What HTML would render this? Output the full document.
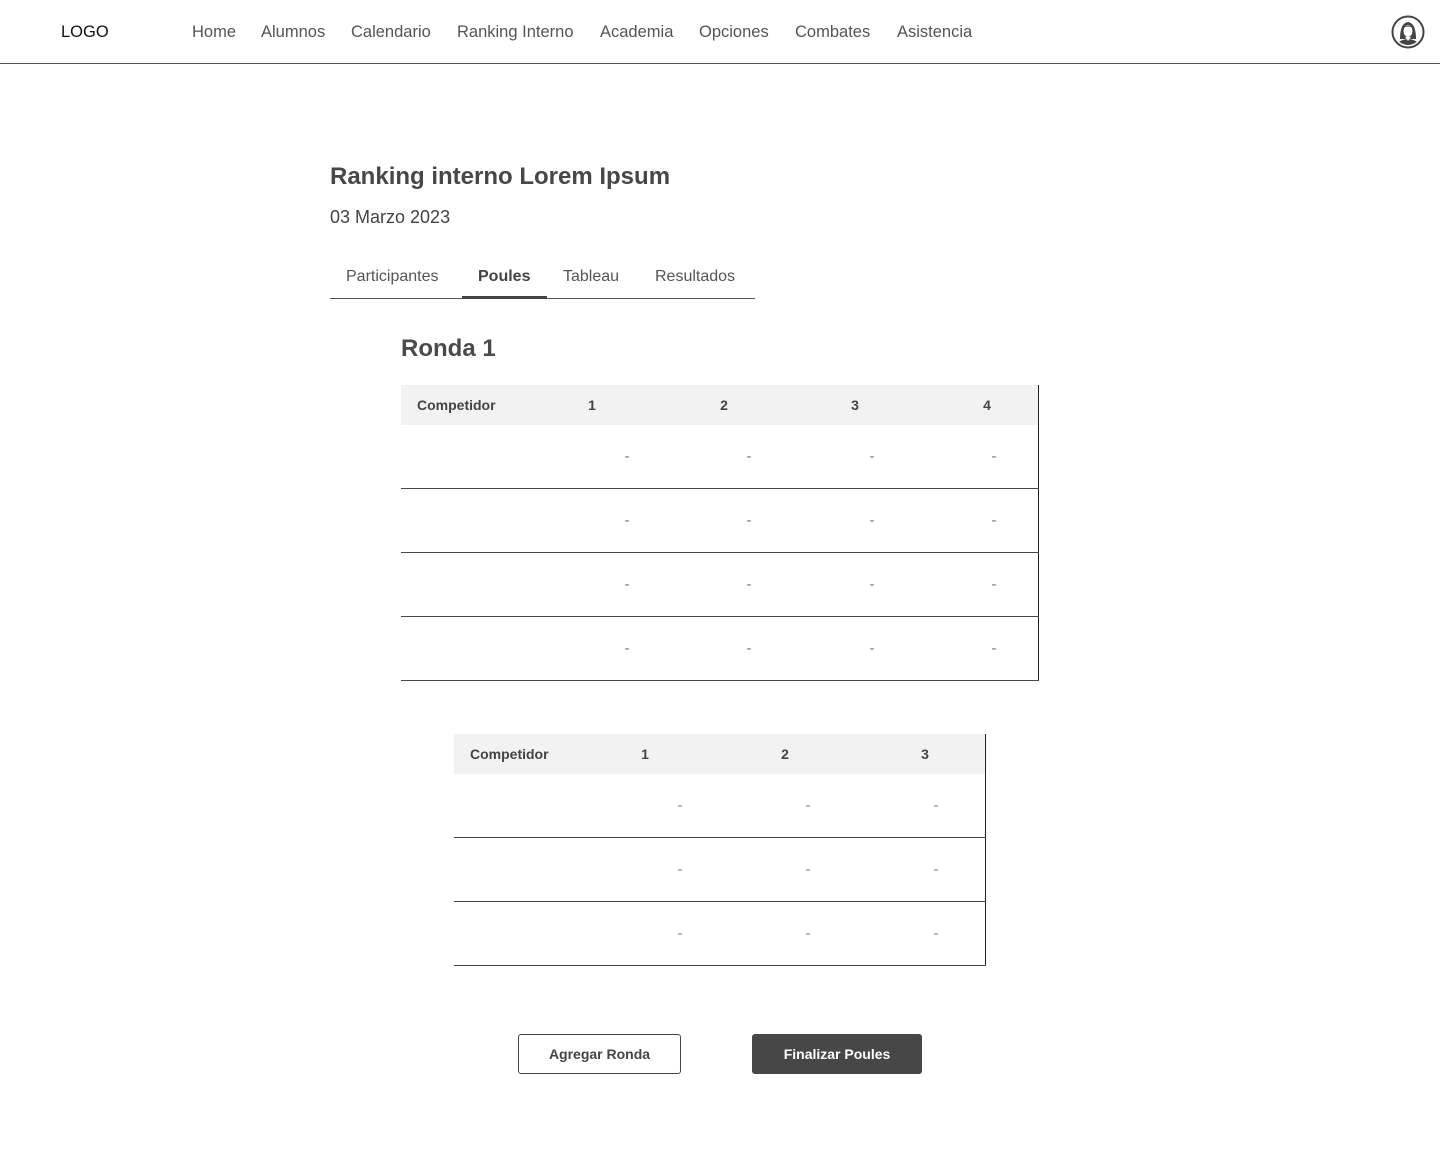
<!DOCTYPE html>
<html><head><meta charset="utf-8"><style>
*{margin:0;padding:0;box-sizing:border-box}
body{width:1440px;height:1155px;position:relative;background:#fff;font-family:"Liberation Sans",Arial,sans-serif;color:#4a4a4a;overflow:hidden}
.a{position:absolute;white-space:nowrap}
.nav{top:22px;font-size:16.5px;color:#555;line-height:20px}
.c{transform:translateX(-50%)}
.hd{background:#f2f2f2;position:absolute}
.th{font-size:14px;font-weight:bold;color:#444;line-height:16px}
.dash{font-size:15px;color:#777;line-height:16px}
.hl{position:absolute;height:1px;background:#444}
.vl{position:absolute;width:1px;background:#222}
</style></head><body>
<div class="a" style="left:61px;top:22px;font-size:16.5px;color:#111;line-height:20px">LOGO</div>
<div class="a nav" style="left:192px">Home</div>
<div class="a nav" style="left:261px">Alumnos</div>
<div class="a nav" style="left:351px">Calendario</div>
<div class="a nav" style="left:457px">Ranking Interno</div>
<div class="a nav" style="left:600px">Academia</div>
<div class="a nav" style="left:699px">Opciones</div>
<div class="a nav" style="left:795px">Combates</div>
<div class="a nav" style="left:897px">Asistencia</div>
<svg class="a" style="left:1391px;top:15px" width="34" height="34" viewBox="0 0 34 34">
<circle cx="17" cy="17" r="15.5" fill="#fff" stroke="#444" stroke-width="2"/>
<clipPath id="cp"><circle cx="17" cy="17" r="13"/></clipPath>
<g clip-path="url(#cp)">
<path d="M9 24 Q9 8 17 7 Q25 8 25 24 Z" fill="#444"/>
<ellipse cx="17" cy="16" rx="5" ry="6.5" fill="#fff" stroke="#444" stroke-width="1"/>
<path d="M12 13 Q17 8 22 13 Q17 10 12 13Z" fill="#444"/>
<path d="M4 34 Q5 25 17 24 Q29 25 30 34Z" fill="#444"/>
<path d="M14 22 L17 26 L20 22 Z" fill="#fff"/>
</g></svg>
<div class="hl" style="left:0;top:63px;width:1440px;background:#555"></div>

<div class="a" style="left:330px;top:162px;font-size:24px;font-weight:bold;color:#474747;line-height:30px">Ranking interno Lorem Ipsum</div>
<div class="a" style="left:330px;top:206px;font-size:18px;color:#444;line-height:22px">03 Marzo 2023</div>
<div class="a" style="left:346px;top:267px;font-size:16px;color:#555;line-height:20px">Participantes</div>
<div class="a" style="left:478px;top:267px;font-size:16px;font-weight:bold;color:#444;line-height:20px">Poules</div>
<div class="a" style="left:563px;top:267px;font-size:16px;color:#555;line-height:20px">Tableau</div>
<div class="a" style="left:655px;top:267px;font-size:16px;color:#555;line-height:20px">Resultados</div>
<div class="hl" style="left:330px;top:298px;width:425px;background:#555"></div>
<div class="a" style="left:462px;top:296px;width:85px;height:3px;background:#444"></div>

<div class="a" style="left:401px;top:335px;font-size:24px;font-weight:bold;color:#4a4a4a;line-height:28px">Ronda 1</div>

<div class="hd" style="left:401px;top:385px;width:637px;height:40px"></div>
<div class="vl" style="left:1038px;top:385px;height:296px"></div>
<div class="a th" style="left:417px;top:397px">Competidor</div>
<div class="a th c" style="left:592px;top:397px">1</div>
<div class="a th c" style="left:724px;top:397px">2</div>
<div class="a th c" style="left:855px;top:397px">3</div>
<div class="a th c" style="left:987px;top:397px">4</div>
<div class="hl" style="left:401px;top:488px;width:638px"></div>
<div class="hl" style="left:401px;top:552px;width:638px"></div>
<div class="hl" style="left:401px;top:616px;width:638px"></div>
<div class="hl" style="left:401px;top:680px;width:638px"></div>

<div class="hd" style="left:454px;top:734px;width:531px;height:40px"></div>
<div class="vl" style="left:985px;top:734px;height:232px"></div>
<div class="a th" style="left:470px;top:746px">Competidor</div>
<div class="a th c" style="left:645px;top:746px">1</div>
<div class="a th c" style="left:785px;top:746px">2</div>
<div class="a th c" style="left:925px;top:746px">3</div>
<div class="hl" style="left:454px;top:837px;width:532px"></div>
<div class="hl" style="left:454px;top:901px;width:532px"></div>
<div class="hl" style="left:454px;top:965px;width:532px"></div>

<div id="d"></div>

<div class="a" style="left:518px;top:1034px;width:163px;height:40px;border:1px solid #444;border-radius:3px;font-size:14px;font-weight:bold;color:#444;text-align:center;line-height:38px">Agregar Ronda</div>
<div class="a" style="left:752px;top:1034px;width:170px;height:40px;background:#474747;border-radius:3px;font-size:14px;font-weight:bold;color:#fff;text-align:center;line-height:40px">Finalizar Poules</div>

<!-- dashes -->
<div class="a dash c" style="left:627px;top:449px">-</div><div class="a dash c" style="left:749px;top:449px">-</div><div class="a dash c" style="left:872px;top:449px">-</div><div class="a dash c" style="left:994px;top:449px">-</div>
<div class="a dash c" style="left:627px;top:513px">-</div><div class="a dash c" style="left:749px;top:513px">-</div><div class="a dash c" style="left:872px;top:513px">-</div><div class="a dash c" style="left:994px;top:513px">-</div>
<div class="a dash c" style="left:627px;top:577px">-</div><div class="a dash c" style="left:749px;top:577px">-</div><div class="a dash c" style="left:872px;top:577px">-</div><div class="a dash c" style="left:994px;top:577px">-</div>
<div class="a dash c" style="left:627px;top:641px">-</div><div class="a dash c" style="left:749px;top:641px">-</div><div class="a dash c" style="left:872px;top:641px">-</div><div class="a dash c" style="left:994px;top:641px">-</div>
<div class="a dash c" style="left:680px;top:798px">-</div><div class="a dash c" style="left:808px;top:798px">-</div><div class="a dash c" style="left:936px;top:798px">-</div>
<div class="a dash c" style="left:680px;top:862px">-</div><div class="a dash c" style="left:808px;top:862px">-</div><div class="a dash c" style="left:936px;top:862px">-</div>
<div class="a dash c" style="left:680px;top:926px">-</div><div class="a dash c" style="left:808px;top:926px">-</div><div class="a dash c" style="left:936px;top:926px">-</div>
</body></html>
